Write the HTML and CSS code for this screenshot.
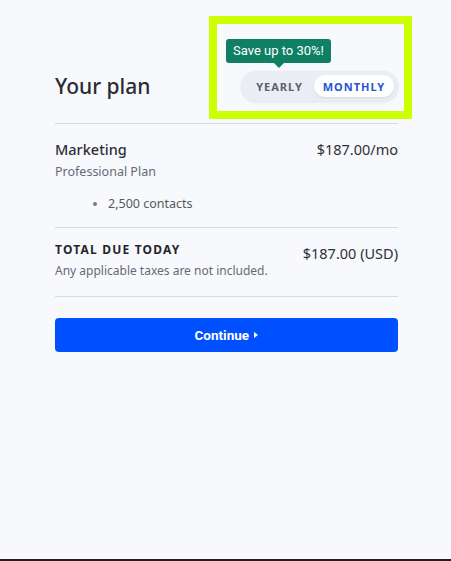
FILE: index.html
```html
<!DOCTYPE html>
<html lang="en">
<head>
    <meta charset="UTF-8">
    <meta name="viewport" content="width=device-width, initial-scale=1.0">
    <title>Your plan</title>
    <link rel="stylesheet" href="styles.css">
</head>
<body>
    <div class="panel">
        <div class="plan-header">
            <h1>Your plan</h1>
            <div class="toggle-wrap">
                <div class="highlight"></div>
                <div class="tooltip">Save up to 30%!</div>
                <div class="toggle">
                    <button type="button" class="toggle-option">YEARLY</button>
                    <button type="button" class="toggle-option active">MONTHLY</button>
                </div>
            </div>
        </div>

        <div class="plan-section">
            <div class="row">
                <div class="product">Marketing</div>
                <div class="price">$187.00/mo</div>
            </div>
            <div class="edition">Professional Plan</div>
            <ul class="features">
                <li>2,500 contacts</li>
            </ul>
        </div>

        <div class="total-section">
            <div class="row">
                <div class="total-label">TOTAL DUE TODAY</div>
                <div class="total-price">$187.00 (USD)</div>
            </div>
            <div class="taxes">Any applicable taxes are not included.</div>
        </div>

        <button type="button" class="continue">Continue <span class="caret"></span></button>
    </div>
</body>
</html>
```

FILE: styles.css
```css
html {
    height: 100%;
}
body {
    font-family: "Noto Sans", "Open Sans", sans-serif;
    background-color: #f8f9fd;
    color: #2f3038;
    margin: 0;
    padding: 0;
    box-sizing: border-box;
    height: 561px;
    border-bottom: 2px solid #2a1a20;
}
.panel {
    width: 343px;
    margin-left: 55px;
    padding-top: 71px;
}
.plan-header {
    display: flex;
    justify-content: space-between;
    align-items: flex-end;
    padding-bottom: 22px;
    border-bottom: 1px solid #d6d9df;
}
h1 {
    margin: 0;
    font-size: 21px;
    line-height: 30px;
    font-weight: 500;
    color: #2b2c33;
}
.toggle-wrap {
    position: relative;
}
.highlight {
    position: absolute;
    left: -32px;
    top: -55px;
    width: 203px;
    height: 103px;
    box-sizing: border-box;
    border: 8px solid #ccff00;
    pointer-events: none;
}
.tooltip {
    position: absolute;
    left: -15px;
    top: -32px;
    height: 24px;
    line-height: 24px;
    padding: 0 7px;
    background-color: #0f8064;
    color: #fff;
    border-radius: 3px;
    font-family: Roboto, sans-serif;
    font-size: 13px;
    white-space: nowrap;
}
.tooltip::after {
    content: "";
    position: absolute;
    left: 48px;
    bottom: -5px;
    border-left: 5px solid transparent;
    border-right: 5px solid transparent;
    border-top: 5px solid #0f8064;
}
.toggle {
    display: flex;
    padding: 4px;
    background-color: #eaedf3;
    border-radius: 16px;
    box-shadow: 0 1px 3px rgba(40, 50, 80, 0.12);
}
.toggle-option {
    height: 22px;
    border: none;
    background: none;
    border-radius: 11px;
    font-family: "Noto Sans", sans-serif;
    font-size: 11px;
    font-weight: 700;
    letter-spacing: 1px;
    color: #5b6070;
    padding: 0;
    width: 69px;
    cursor: pointer;
}
.toggle-option.active {
    width: 80px;
    background-color: #fff;
    color: #1f55d6;
    box-shadow: 0 1px 2px rgba(40, 50, 80, 0.1);
}
.row {
    display: flex;
    justify-content: space-between;
    align-items: flex-start;
}
.plan-section {
    padding-top: 15px;
    padding-bottom: 13px;
    border-bottom: 1px solid #d6d9df;
}
.product {
    font-size: 14.5px;
    line-height: 20px;
    font-weight: 500;
}
.price {
    font-size: 14.5px;
    line-height: 20px;
}
.edition {
    margin-top: 3px;
    font-size: 12.5px;
    line-height: 20px;
    color: #676a74;
}
.features {
    margin: 12px 0 0;
    padding-left: 53px;
    font-size: 12.5px;
    line-height: 20px;
    color: #55585f;
}
.features li::marker {
    color: #777a82;
    font-size: 11px;
}
.total-section {
    padding-top: 13px;
    padding-bottom: 16px;
    border-bottom: 1px solid #d6d9df;
}
.total-label {
    font-size: 12px;
    line-height: 18px;
    font-weight: 700;
    letter-spacing: 1.2px;
    color: #25262d;
}
.total-price {
    margin-top: 3px;
    font-size: 14.5px;
    line-height: 18px;
}
.taxes {
    font-size: 12px;
    line-height: 18px;
    color: #676a74;
}
.continue {
    display: block;
    width: 100%;
    height: 34px;
    margin-top: 21px;
    border: none;
    border-radius: 4px;
    background-color: #0050ff;
    color: #fff;
    font-family: Roboto, sans-serif;
    font-size: 13.5px;
    font-weight: 700;
    cursor: pointer;
}
.caret {
    display: inline-block;
    vertical-align: middle;
    margin-left: 2px;
    margin-bottom: 2px;
    border-top: 3.5px solid transparent;
    border-bottom: 3.5px solid transparent;
    border-left: 4px solid #fff;
}
```
